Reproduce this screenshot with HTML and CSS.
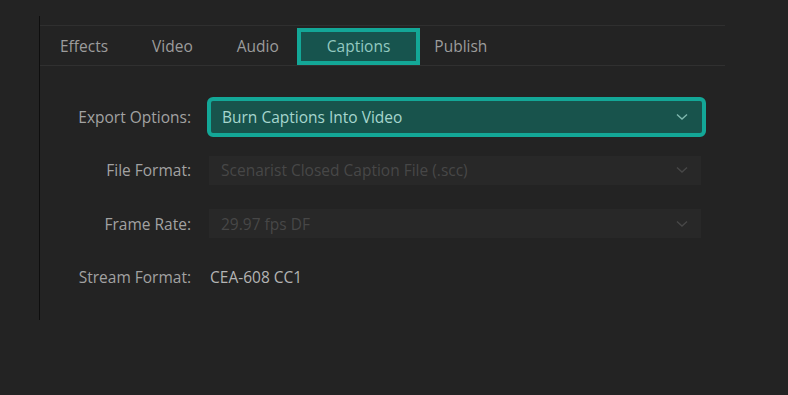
FILE: index.html
```html
<!DOCTYPE html>
<html lang="en">
  <head>
    <meta charset="UTF-8" />
    <title>Export Settings - Captions</title>
    <link rel="stylesheet" href="styles.css">
  </head>
  <body>
    <div class="panel">
      <nav class="tabs">
        <span class="tab">Effects</span>
        <span class="tab">Video</span>
        <span class="tab">Audio</span>
        <span class="tab active">Captions</span>
        <span class="tab">Publish</span>
      </nav>

      <div class="form">
        <div class="row">
          <span class="label">Export Options:</span>
          <div class="select highlight">
            <span>Burn Captions Into Video</span>
            <svg class="chev" width="12" height="8" viewBox="0 0 12 8"><path d="M1 1.5 L6 6 L11 1.5" fill="none" stroke="currentColor" stroke-width="1.4"/></svg>
          </div>
        </div>
        <div class="row">
          <span class="label">File Format:</span>
          <div class="select disabled">
            <span>Scenarist Closed Caption File (.scc)</span>
            <svg class="chev" width="12" height="8" viewBox="0 0 12 8"><path d="M1 1.5 L6 6 L11 1.5" fill="none" stroke="currentColor" stroke-width="1.4"/></svg>
          </div>
        </div>
        <div class="row">
          <span class="label">Frame Rate:</span>
          <div class="select disabled">
            <span>29.97 fps DF</span>
            <svg class="chev" width="12" height="8" viewBox="0 0 12 8"><path d="M1 1.5 L6 6 L11 1.5" fill="none" stroke="currentColor" stroke-width="1.4"/></svg>
          </div>
        </div>
        <div class="row">
          <span class="label">Stream Format:</span>
          <span class="value">CEA-608 CC1</span>
        </div>
      </div>
    </div>
  </body>
</html>
```

FILE: styles.css
```css
body {
  margin: 0;
  background: #232323;
  font-family: "Open Sans", "Noto Sans", sans-serif;
  font-size: 15.5px;
  height: 395px;
  overflow: hidden;
}

.panel {
  margin: 16px 0 0 39px;
  height: 304px;
  box-sizing: border-box;
  border-left: 1px solid #0e0e0e;
  padding-top: 9px;
}

.tabs {
  display: flex;
  align-items: center;
  width: 685px;
  height: 41px;
  border-top: 1px solid #2f2f2f;
  border-bottom: 1px solid #303030;
  box-sizing: border-box;
  padding-left: 0;
}

.tab {
  color: #9c9c9c;
  padding: 0 22px;
  line-height: 38px;
}

.tab.active {
  color: #93c9c0;
  background: #17544e;
  border: 4px solid #13a797;
  padding: 0 26px;
  line-height: 29px;
  margin: 1px -8px 0 -4px;
}

.tab:first-child {
  padding-left: 20px;
}

.form {
  padding-top: 31px;
  display: flex;
  flex-direction: column;
  gap: 13.4px;
}

.row {
  display: flex;
  align-items: center;
  height: 40px;
}

.label {
  width: 151px;
  text-align: right;
  color: #a2a2a2;
  padding-right: 16px;
}

.select {
  display: flex;
  align-items: center;
  justify-content: space-between;
  box-sizing: border-box;
}

.select.highlight {
  width: 499px;
  height: 40px;
  background: #18534c;
  border: 4px solid #13a797;
  border-radius: 6px;
  padding: 0 14px 0 11px;
  color: #a6d6ce;
}

.select.disabled {
  width: 492px;
  height: 29px;
  margin-left: 2px;
  background: #282828;
  padding: 0 13px 0 12px;
  color: #474747;
}

.chev {
  display: block;
}

.highlight .chev {
  color: #7fb8ae;
}

.value {
  color: #b4b4b4;
  padding-left: 3px;
}
```
